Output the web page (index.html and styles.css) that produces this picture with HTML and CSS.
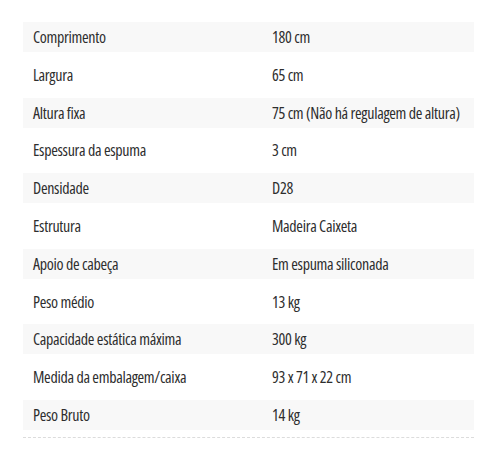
FILE: index.html
```html
<!DOCTYPE html>
<html lang="pt">
<head>
<meta charset="utf-8">
<link rel="stylesheet" href="styles.css">
</head>
<body>
<div class="specs">
  <div class="row shade"><div class="k">Comprimento</div><div class="v">180 cm</div></div>
  <div class="row"><div class="k">Largura</div><div class="v">65 cm</div></div>
  <div class="row shade"><div class="k">Altura fixa</div><div class="v">75 cm (Não há regulagem de altura)</div></div>
  <div class="row"><div class="k">Espessura da espuma</div><div class="v">3 cm</div></div>
  <div class="row shade"><div class="k">Densidade</div><div class="v">D28</div></div>
  <div class="row"><div class="k">Estrutura</div><div class="v">Madeira Caixeta</div></div>
  <div class="row shade"><div class="k">Apoio de cabeça</div><div class="v">Em espuma siliconada</div></div>
  <div class="row"><div class="k">Peso médio</div><div class="v">13 kg</div></div>
  <div class="row shade"><div class="k">Capacidade estática máxima</div><div class="v">300 kg</div></div>
  <div class="row"><div class="k">Medida da embalagem/caixa</div><div class="v">93 x 71 x 22 cm</div></div>
  <div class="row shade"><div class="k">Peso Bruto</div><div class="v">14 kg</div></div>
  <div class="rule"></div>
</div>
</body>
</html>
```

FILE: styles.css
```css
html, body {
  margin: 0;
  padding: 0;
  background: #ffffff;
}
body {
  font-family: "Open Sans", "Noto Sans", sans-serif;
  font-stretch: 75%;
  font-size: 16px;
  letter-spacing: -0.3px;
  color: #2e2e2e;
}
.specs {
  width: 451px;
  margin-left: 23px;
  padding-top: 22px;
  display: flex;
  flex-direction: column;
  gap: 7.8px;
}
.row {
  display: grid;
  grid-template-columns: 249px 1fr;
  height: 30px;
  align-items: center;
}
.row.shade {
  background: #f8f8f8;
}
.k {
  padding-left: 10px;
}
.rule {
  margin-top: -1px;
  border-top: 1px dashed #dcdcdc;
}
```
